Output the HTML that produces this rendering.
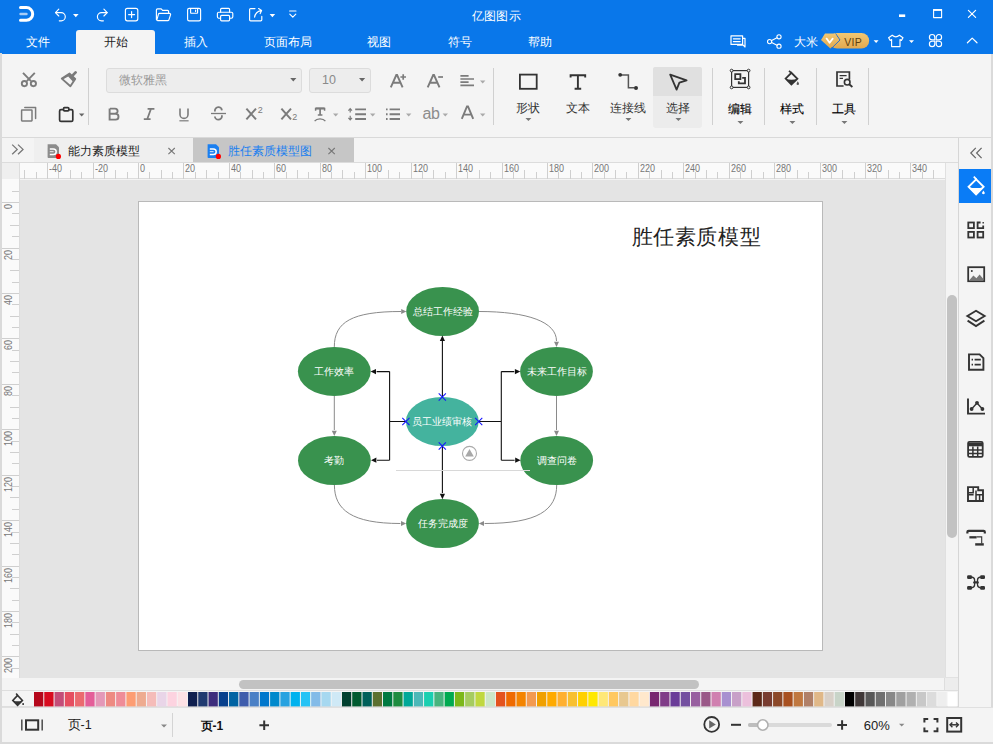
<!DOCTYPE html><html><head><meta charset="utf-8"><style>
*{margin:0;padding:0;box-sizing:border-box}
html,body{width:993px;height:744px;overflow:hidden;background:#f4f4f4;font-family:"Liberation Sans", sans-serif;}
.a{position:absolute}
.t{position:absolute;white-space:nowrap;line-height:1}
svg{position:absolute;overflow:visible}
</style></head><body>
<div class="a" style="left:0;top:0;width:993px;height:54px;background:#0977ea"></div>
<div class="a" style="left:76px;top:30px;width:79px;height:24px;background:#f4f4f4;border-radius:3px 3px 0 0"></div>
<svg width="993" height="53" style="left:0;top:0" fill="none" stroke="#fff" stroke-linecap="round" stroke-linejoin="round">
<path d="M20.5 7.6 H26.4 A6.3 6.3 0 0 1 26.4 20.2 H20.5" stroke-width="3"/>
<path d="M20.5 14 H26.5" stroke-width="2.4" stroke="#a9cdf6"/>
<g stroke-width="1.15">
<path d="M58.8 9.2 L55.5 12.6 L58.8 16"/><path d="M55.6 12.6 H61.2 A4.1 4.1 0 0 1 61.2 20.8 H59.3"/>
<path d="M103.9 9.2 L107.2 12.6 L103.9 16"/><path d="M107.1 12.6 H101.5 A4.1 4.1 0 0 0 101.5 20.8 H103.4"/>
<rect x="125.4" y="8.4" width="12.4" height="12.4" rx="2"/>
<path d="M131.6 11.6 V17.6 M128.6 14.6 H134.6"/>
<path d="M156.4 19.4 V10 A1.2 1.2 0 0 1 157.6 8.8 H161.2 L162.6 10.4 H167.6 A1 1 0 0 1 168.6 11.4 V13"/>
<path d="M156.8 20.2 L158.4 14.4 A1.2 1.2 0 0 1 159.6 13.4 H169.6 A1 1 0 0 1 170.6 14.6 L169 19.6 A1 1 0 0 1 168 20.6 H157.6"/>
<rect x="187.6" y="8.4" width="13" height="12.4" rx="1.6"/>
<path d="M190.6 8.6 V12.6 A0.6 0.6 0 0 0 191.2 13.2 H197 A0.6 0.6 0 0 0 197.6 12.6 V8.6"/><path d="M195.6 10 V11.6"/>
<path d="M220.6 12.2 V9.4 A1 1 0 0 1 221.6 8.4 H228.6 A1 1 0 0 1 229.6 9.4 V12.2"/>
<path d="M220.4 18.2 H218.6 A1.4 1.4 0 0 1 217.4 16.8 V13.6 A1.4 1.4 0 0 1 218.8 12.2 H231.4 A1.4 1.4 0 0 1 232.8 13.6 V16.8 A1.4 1.4 0 0 1 231.4 18.2 H229.6"/>
<rect x="220.6" y="15.4" width="9" height="5.4" rx="1"/>
<path d="M255 8.6 H250.6 A1 1 0 0 0 249.6 9.6 V19.8 A1 1 0 0 0 250.6 20.8 H260.8 A1 1 0 0 0 261.8 19.8 V16.4"/>
<path d="M254.6 17.2 Q255.4 11.6 261.4 10.4 M258.6 8.6 L261.6 10.4 L260.2 13.6"/>
<path d="M289.6 11 H296 M289.8 14.2 L292.8 17.2 L295.8 14.2"/>
</g>
<path d="M73 14 H78.6 L75.8 17.2 Z" fill="#fff" stroke="none"/>
<path d="M269.6 14 H275.2 L272.4 17.2 Z" fill="#fff" stroke="none"/>
<rect x="899" y="14.4" width="6.2" height="2.6" fill="#fff" stroke="none"/>
<path d="M933.6 9.6 H941.6 V17.6 H933.6 Z" stroke-width="1.1" stroke-linecap="butt"/><path d="M933.2 10 H942" stroke-width="1.8" stroke-linecap="butt"/>
<path d="M968.4 10.4 L975.6 17.4 M975.6 10.4 L968.4 17.4" stroke-width="1.2"/>
</svg>
<div class="t" style="left:472px;top:10px;font-size:12px;color:#fff;letter-spacing:0.2px">亿图图示</div>
<div class="t" style="left:25.5px;top:36px;font-size:12px;color:#fff;letter-spacing:0.25px">文件</div>
<div class="t" style="left:103.5px;top:36px;font-size:12px;color:#222;letter-spacing:0.25px">开始</div>
<div class="t" style="left:183.5px;top:36px;font-size:12px;color:#fff;letter-spacing:0.25px">插入</div>
<div class="t" style="left:263.5px;top:36px;font-size:12px;color:#fff;letter-spacing:0.25px">页面布局</div>
<div class="t" style="left:366.5px;top:36px;font-size:12px;color:#fff;letter-spacing:0.25px">视图</div>
<div class="t" style="left:447.5px;top:36px;font-size:12px;color:#fff;letter-spacing:0.25px">符号</div>
<div class="t" style="left:527.5px;top:36px;font-size:12px;color:#fff;letter-spacing:0.25px">帮助</div>
<svg width="993" height="53" style="left:0;top:0" fill="none" stroke="#fff" stroke-linecap="round" stroke-linejoin="round" stroke-width="1.3">
<path d="M742.6 44.4 H731 V35.8 H742.6 Z" stroke-width="1.2"/><path d="M733.4 38.8 H740.2 M733.4 41.6 H740.2" stroke-width="1.2"/><path d="M742.8 38.4 H745 V47 L743.2 45.2 H737.6 V44.6" stroke-width="1.2"/>
<g stroke-width="1.1"><circle cx="779" cy="36.8" r="2.1"/><circle cx="769.6" cy="41.6" r="2.1"/><circle cx="779" cy="46.2" r="2.1"/>
<path d="M771.6 40.6 L777 37.8 M771.6 42.6 L777 45.2"/></g>
<path d="M892.2 35.2 L888.6 37.8 L890.2 40.4 L891.6 39.6 V46.6 H900 V39.6 L901.4 40.4 L903 37.8 L899.4 35.2 Q895.8 38.4 892.2 35.2 Z" stroke-width="1.15"/>
<g stroke-width="1.15"><path d="M934.8 37.2 A2.7 2.7 0 1 0 932.1 39.9 H934.8 Z"/><path d="M936.2 37.2 A2.7 2.7 0 1 1 938.9 39.9 H936.2 Z"/><path d="M934.8 43.9 A2.7 2.7 0 1 1 932.1 41.2 H934.8 Z"/><path d="M936.2 43.9 A2.7 2.7 0 1 0 938.9 41.2 H936.2 Z"/></g>
<path d="M967.4 42.8 L972.2 38.1 L977 42.8" stroke-width="1.2"/>
</g>
<path d="M873.6 40.2 H878.6 L876.1 42.9 Z M909 40.2 H914 L911.5 42.9 Z" fill="#fff" stroke="none"/>
</svg>
<div class="t" style="left:794px;top:36px;font-size:12px;color:#fff;letter-spacing:0.2px">大米</div>
<svg width="60" height="20" style="left:818px;top:32px">
<defs><linearGradient id="vg" x1="0" x2="0" y1="0" y2="1"><stop offset="0" stop-color="#f1c773"/><stop offset="1" stop-color="#e2a94f"/></linearGradient></defs>
<rect x="11.4" y="0.9" width="39.8" height="15.6" rx="7.8" fill="url(#vg)"/>
<path d="M17.6 1.6 L22 8 L13.2 16.6" fill="none" stroke="#2a70c8" stroke-width="1"/>
<path d="M3 8 L7 1.4 H17 L21 8 L12.4 16.4 Z" fill="url(#vg)"/>
<path d="M8.6 6.6 L11.6 10.8 L14.7 6.6" fill="none" stroke="#fff" stroke-width="1.8" stroke-linecap="round" stroke-linejoin="round"/>
</svg>
<div class="t" style="left:844.2px;top:36.6px;font-size:10.5px;color:#5e3f10;letter-spacing:0.3px">VIP</div>
<div class="a" style="left:0;top:54px;width:993px;height:83px;background:#f4f4f4"></div>
<div class="a" style="left:0;top:137px;width:993px;height:1px;background:#d9d9d9"></div>
<div class="a" style="left:88px;top:68px;width:1px;height:57px;background:#d0d0d0"></div>
<div class="a" style="left:493px;top:68px;width:1px;height:57px;background:#d0d0d0"></div>
<div class="a" style="left:712px;top:68px;width:1px;height:57px;background:#d0d0d0"></div>
<div class="a" style="left:764px;top:68px;width:1px;height:57px;background:#d0d0d0"></div>
<div class="a" style="left:816px;top:68px;width:1px;height:57px;background:#d0d0d0"></div>
<div class="a" style="left:868px;top:68px;width:1px;height:57px;background:#d0d0d0"></div>
<div class="a" style="left:106px;top:68px;width:196px;height:25px;background:#ededed;border:1px solid #dcdcdc;border-radius:3px"></div>
<div class="a" style="left:309px;top:68px;width:62px;height:25px;background:#ededed;border:1px solid #dcdcdc;border-radius:3px"></div>
<div class="t" style="left:118.5px;top:73.5px;font-size:12.3px;color:#9a9a9a;">微软雅黑</div>
<div class="t" style="left:322px;top:73.8px;font-size:12.5px;color:#8a8a8a;">10</div>
<svg width="993" height="137" style="left:0;top:0" fill="none" stroke="#7b7b7b" stroke-width="1.5" stroke-linecap="round" stroke-linejoin="round">
<path d="M290.2 78 H296.4 L293.3 81.6 Z M359 78 H365.2 L362.1 81.6 Z" fill="#666" stroke="none"/>
<!-- scissors -->
<circle cx="24.4" cy="83.6" r="2.6" stroke-width="1.9"/><circle cx="33.4" cy="83.6" r="2.6" stroke-width="1.9"/>
<path d="M23 72.8 L31 81.2 M34.8 72.8 L26.8 81.2" stroke-width="1.9" stroke-linecap="butt"/>
<!-- brush -->
<path d="M61.8 78.6 L69.6 73.6 L75.2 79 L70.4 86.2 Z" stroke-width="1.9"/>
<path d="M69.6 73.6 L75.2 79 L72.8 81.6 L68.2 76.6 L63.6 79 L61.8 78.6 Z" fill="#7b7b7b" stroke="none"/>
<path d="M71.8 76.4 L75.6 72.4" stroke-width="2.8"/>
<!-- copy -->
<rect x="21.6" y="110" width="10.4" height="11" rx="0.4"/>
<path d="M24.8 107.6 H35.6 V118.6"/>
<!-- paste -->
<g stroke="#333" stroke-width="1.7">
<rect x="59.6" y="109.6" width="13.2" height="11.8" rx="1.4"/>
<rect x="63.6" y="107.6" width="5.2" height="3.2" rx="0.8" fill="#f4f4f4"/>
</g>
<path d="M79 113.6 H84.4 L81.7 116.6 Z" fill="#666" stroke="none"/>
</svg>
<div class="a" style="left:653px;top:67px;width:49px;height:61px;background:#ececec;border-radius:3px"></div>
<div class="a" style="left:653px;top:67px;width:49px;height:29px;background:#e0e0e0;border-radius:2px 2px 0 0"></div>
<svg width="993" height="137" style="left:0;top:0" fill="none" stroke="#333" stroke-width="1.8" stroke-linecap="butt" stroke-linejoin="miter">
<rect x="519.9" y="74.6" width="16.8" height="14.2"/>
<path d="M570.6 77.6 V75.2 H585.2 V77.6 M577.9 75.2 V88.8 M574.6 88.8 H581.2" stroke-width="1.9"/>
<path d="M620.4 75 H628.4 V87.8 H634.6" stroke-width="1.5" stroke="#555"/>
<circle cx="620.2" cy="74.8" r="1.9" fill="#333" stroke="none"/><circle cx="636" cy="88" r="2" fill="#333" stroke="none"/>
<path d="M670.2 74.6 L686.6 80.4 L679.4 82.6 L676.6 89.6 Z" stroke-width="1.8" stroke-linejoin="round"/>
<rect x="731.6" y="70.6" width="17" height="16.8" stroke-width="1.2"/>
<circle cx="731.6" cy="70.6" r="1.4" fill="#f4f4f4" stroke-width="1"/><circle cx="748.6" cy="70.6" r="1.4" fill="#f4f4f4" stroke-width="1"/>
<circle cx="731.6" cy="87.4" r="1.4" fill="#f4f4f4" stroke-width="1"/><circle cx="748.6" cy="87.4" r="1.4" fill="#f4f4f4" stroke-width="1"/>
<path d="M735.2 74.2 H740.4 V79.2 H735.2 Z M742.2 77.8 H745 V83.4 H738.8 V81.2" stroke-width="1.8"/>
<path d="M785.6 78.6 L791.4 72.8 L797.4 78.8 L791.4 84.6 Z" stroke-width="1.8"/>
<path d="M785.8 79 Q791.4 80.4 797.2 79 L791.4 84.8 Z" fill="#333" stroke="none"/>
<path d="M789 70.8 L791.6 73.2" stroke-width="1.7"/>
<path d="M797.8 81.2 L798.9 83.2 A1.2 1.2 0 1 1 796.7 83.2 Z" fill="#555" stroke="none"/>
<path d="M849.4 79.4 V72 H837 V86 H843.6" stroke-width="1.7"/>
<path d="M839.6 75.6 H846.6 M839.6 78.4 H843" stroke-width="1.3"/>
<circle cx="847.2" cy="82.2" r="2.8" stroke-width="1.6"/><path d="M849.2 84.2 L852.4 87" stroke-width="1.8"/>
</svg>
<div class="t" style="left:515.5px;top:101.5px;font-size:12.2px;color:#333;">形状</div>
<div class="t" style="left:565.5px;top:101.5px;font-size:12.2px;color:#333;">文本</div>
<div class="t" style="left:609.5px;top:101.5px;font-size:12.2px;color:#333;">连接线</div>
<div class="t" style="left:665.5px;top:101.5px;font-size:12.2px;color:#333;">选择</div>
<div class="t" style="left:727.5px;top:103.4px;font-size:12.2px;color:#000;-webkit-text-stroke:0.1px #000">编辑</div>
<div class="t" style="left:779.5px;top:103.4px;font-size:12.2px;color:#000;-webkit-text-stroke:0.1px #000">样式</div>
<div class="t" style="left:831.5px;top:103.4px;font-size:12.2px;color:#000;-webkit-text-stroke:0.1px #000">工具</div>
<svg width="993" height="137" style="left:0;top:0" fill="#777">
<path d="M525.4 118 H531.4 L528.4 121 Z M625.4 118 H631.4 L628.4 121 Z M675.4 118 H681.4 L678.4 121 Z"/>
<path d="M737.4 121 H743.4 L740.4 124 Z M789.4 121 H795.4 L792.4 124 Z M841.4 121 H847.4 L844.4 124 Z"/>
</svg>
<div class="a" style="left:0;top:138px;width:958px;height:24px;background:#f4f4f4"></div>
<div class="a" style="left:34px;top:138px;width:159px;height:24px;background:#efefef"></div>
<div class="a" style="left:193px;top:138px;width:161px;height:24px;background:#c6c6c6"></div>
<div class="t" style="left:67.5px;top:145px;font-size:12px;color:#222;">能力素质模型</div>
<div class="t" style="left:227.5px;top:145px;font-size:12px;color:#1a7ff0;">胜任素质模型图</div>
<div class="a" style="left:2px;top:162px;width:956px;height:17px;background:#fafafa;border-top:1px solid #dcdcdc;border-bottom:1px solid #dcdcdc"></div>
<div class="a" style="left:2px;top:163px;width:17px;height:16px;background:#efefef"></div>
<div class="a" style="left:2px;top:179px;width:17px;height:499px;background:#fafafa"></div>
<div class="a" style="left:19px;top:163px;width:1px;height:515px;background:#dcdcdc"></div>
<svg width="993" height="180" style="left:0;top:0">
<path d="M12.2 144.6 L17.2 149.4 L12.2 154.2 M18 144.6 L23 149.4 L18 154.2" fill="none" stroke="#777" stroke-width="1.3"/>
<path d="M47.6 144.2 H56 L59 147.2 V157.2 A0.8 0.8 0 0 1 58.2 158 H48.4 A0.8 0.8 0 0 1 47.6 157.2 Z" fill="#8c8c8c"/>
<path d="M49.8 148.9 H53.4 A2.8 2.8 0 0 1 53.4 154.5 H49.8" fill="none" stroke="#fff" stroke-width="1.5"/><path d="M49.8 151.6 H53.6" stroke="#dcdcdc" stroke-width="1.2"/>
<circle cx="58.4" cy="156.4" r="2.6" fill="#f00"/>
<path d="M168.4 148 L174.8 154.2 M174.8 148 L168.4 154.2" stroke="#777" stroke-width="1.1"/>
<path d="M207.6 144.2 H216 L219 147.2 V157.2 A0.8 0.8 0 0 1 218.2 158 H208.4 A0.8 0.8 0 0 1 207.6 157.2 Z" fill="#1a7ff0"/>
<path d="M209.8 148.9 H213.4 A2.8 2.8 0 0 1 213.4 154.5 H209.8" fill="none" stroke="#fff" stroke-width="1.5"/><path d="M209.8 151.6 H213.6" stroke="#b8d8fb" stroke-width="1.2"/>
<circle cx="218.4" cy="156.4" r="2.6" fill="#f00"/>
<path d="M328.4 148 L334.8 154.2 M334.8 148 L328.4 154.2" stroke="#777" stroke-width="1.1"/>
</svg>
<svg width="993" height="744" style="left:0;top:0" fill="none" stroke="#cfcfcf" stroke-width="1"><path d="M24.5 170 V179"/><path d="M36.5 172 V179"/><path d="M47.5 163 V179"/><path d="M58.5 172 V179"/><path d="M70.5 170 V179"/><path d="M81.5 172 V179"/><path d="M93.5 163 V179"/><path d="M104.5 172 V179"/><path d="M115.5 170 V179"/><path d="M127.5 172 V179"/><path d="M138.5 163 V179"/><path d="M149.5 172 V179"/><path d="M161.5 170 V179"/><path d="M172.5 172 V179"/><path d="M183.5 163 V179"/><path d="M195.5 172 V179"/><path d="M206.5 170 V179"/><path d="M218.5 172 V179"/><path d="M229.5 163 V179"/><path d="M240.5 172 V179"/><path d="M252.5 170 V179"/><path d="M263.5 172 V179"/><path d="M274.5 163 V179"/><path d="M286.5 172 V179"/><path d="M297.5 170 V179"/><path d="M308.5 172 V179"/><path d="M320.5 163 V179"/><path d="M331.5 172 V179"/><path d="M342.5 170 V179"/><path d="M354.5 172 V179"/><path d="M365.5 163 V179"/><path d="M377.5 172 V179"/><path d="M388.5 170 V179"/><path d="M399.5 172 V179"/><path d="M411.5 163 V179"/><path d="M422.5 172 V179"/><path d="M433.5 170 V179"/><path d="M445.5 172 V179"/><path d="M456.5 163 V179"/><path d="M467.5 172 V179"/><path d="M479.5 170 V179"/><path d="M490.5 172 V179"/><path d="M502.5 163 V179"/><path d="M513.5 172 V179"/><path d="M524.5 170 V179"/><path d="M536.5 172 V179"/><path d="M547.5 163 V179"/><path d="M558.5 172 V179"/><path d="M570.5 170 V179"/><path d="M581.5 172 V179"/><path d="M592.5 163 V179"/><path d="M604.5 172 V179"/><path d="M615.5 170 V179"/><path d="M626.5 172 V179"/><path d="M638.5 163 V179"/><path d="M649.5 172 V179"/><path d="M661.5 170 V179"/><path d="M672.5 172 V179"/><path d="M683.5 163 V179"/><path d="M695.5 172 V179"/><path d="M706.5 170 V179"/><path d="M717.5 172 V179"/><path d="M729.5 163 V179"/><path d="M740.5 172 V179"/><path d="M751.5 170 V179"/><path d="M763.5 172 V179"/><path d="M774.5 163 V179"/><path d="M785.5 172 V179"/><path d="M797.5 170 V179"/><path d="M808.5 172 V179"/><path d="M820.5 163 V179"/><path d="M831.5 172 V179"/><path d="M842.5 170 V179"/><path d="M854.5 172 V179"/><path d="M865.5 163 V179"/><path d="M876.5 172 V179"/><path d="M888.5 170 V179"/><path d="M899.5 172 V179"/><path d="M910.5 163 V179"/><path d="M922.5 172 V179"/><path d="M933.5 170 V179"/><path d="M12 191.5 H19"/><path d="M2 202.5 H19"/><path d="M12 213.5 H19"/><path d="M10 225.5 H19"/><path d="M12 236.5 H19"/><path d="M2 248.5 H19"/><path d="M12 259.5 H19"/><path d="M10 270.5 H19"/><path d="M12 282.5 H19"/><path d="M2 293.5 H19"/><path d="M12 304.5 H19"/><path d="M10 316.5 H19"/><path d="M12 327.5 H19"/><path d="M2 338.5 H19"/><path d="M12 350.5 H19"/><path d="M10 361.5 H19"/><path d="M12 372.5 H19"/><path d="M2 384.5 H19"/><path d="M12 395.5 H19"/><path d="M10 407.5 H19"/><path d="M12 418.5 H19"/><path d="M2 429.5 H19"/><path d="M12 441.5 H19"/><path d="M10 452.5 H19"/><path d="M12 463.5 H19"/><path d="M2 475.5 H19"/><path d="M12 486.5 H19"/><path d="M10 497.5 H19"/><path d="M12 509.5 H19"/><path d="M2 520.5 H19"/><path d="M12 532.5 H19"/><path d="M10 543.5 H19"/><path d="M12 554.5 H19"/><path d="M2 566.5 H19"/><path d="M12 577.5 H19"/><path d="M10 588.5 H19"/><path d="M12 600.5 H19"/><path d="M2 611.5 H19"/><path d="M12 622.5 H19"/><path d="M10 634.5 H19"/><path d="M12 645.5 H19"/><path d="M2 656.5 H19"/><path d="M12 668.5 H19"/></svg>
<div class="t" style="left:48.8px;top:164px;font-size:10px;color:#777;transform-origin:0 0;transform:scaleX(0.9)">-40</div>
<div class="t" style="left:94.8px;top:164px;font-size:10px;color:#777;transform-origin:0 0;transform:scaleX(0.9)">-20</div>
<div class="t" style="left:139.8px;top:164px;font-size:10px;color:#777;transform-origin:0 0;transform:scaleX(0.9)">0</div>
<div class="t" style="left:184.8px;top:164px;font-size:10px;color:#777;transform-origin:0 0;transform:scaleX(0.9)">20</div>
<div class="t" style="left:230.8px;top:164px;font-size:10px;color:#777;transform-origin:0 0;transform:scaleX(0.9)">40</div>
<div class="t" style="left:275.8px;top:164px;font-size:10px;color:#777;transform-origin:0 0;transform:scaleX(0.9)">60</div>
<div class="t" style="left:321.8px;top:164px;font-size:10px;color:#777;transform-origin:0 0;transform:scaleX(0.9)">80</div>
<div class="t" style="left:366.8px;top:164px;font-size:10px;color:#777;transform-origin:0 0;transform:scaleX(0.9)">100</div>
<div class="t" style="left:412.8px;top:164px;font-size:10px;color:#777;transform-origin:0 0;transform:scaleX(0.9)">120</div>
<div class="t" style="left:457.8px;top:164px;font-size:10px;color:#777;transform-origin:0 0;transform:scaleX(0.9)">140</div>
<div class="t" style="left:503.8px;top:164px;font-size:10px;color:#777;transform-origin:0 0;transform:scaleX(0.9)">160</div>
<div class="t" style="left:548.8px;top:164px;font-size:10px;color:#777;transform-origin:0 0;transform:scaleX(0.9)">180</div>
<div class="t" style="left:593.8px;top:164px;font-size:10px;color:#777;transform-origin:0 0;transform:scaleX(0.9)">200</div>
<div class="t" style="left:639.8px;top:164px;font-size:10px;color:#777;transform-origin:0 0;transform:scaleX(0.9)">220</div>
<div class="t" style="left:684.8px;top:164px;font-size:10px;color:#777;transform-origin:0 0;transform:scaleX(0.9)">240</div>
<div class="t" style="left:730.8px;top:164px;font-size:10px;color:#777;transform-origin:0 0;transform:scaleX(0.9)">260</div>
<div class="t" style="left:775.8px;top:164px;font-size:10px;color:#777;transform-origin:0 0;transform:scaleX(0.9)">280</div>
<div class="t" style="left:821.8px;top:164px;font-size:10px;color:#777;transform-origin:0 0;transform:scaleX(0.9)">300</div>
<div class="t" style="left:866.8px;top:164px;font-size:10px;color:#777;transform-origin:0 0;transform:scaleX(0.9)">320</div>
<div class="t" style="left:911.8px;top:164px;font-size:10px;color:#777;transform-origin:0 0;transform:scaleX(0.9)">340</div>
<div class="t" style="left:4.4px;top:203.6px;font-size:10px;color:#777;transform-origin:0 0;transform:rotate(-90deg) translate(-90%,0) scaleX(0.9);text-align:right">0</div>
<div class="t" style="left:4.4px;top:249.6px;font-size:10px;color:#777;transform-origin:0 0;transform:rotate(-90deg) translate(-90%,0) scaleX(0.9);text-align:right">20</div>
<div class="t" style="left:4.4px;top:294.6px;font-size:10px;color:#777;transform-origin:0 0;transform:rotate(-90deg) translate(-90%,0) scaleX(0.9);text-align:right">40</div>
<div class="t" style="left:4.4px;top:339.6px;font-size:10px;color:#777;transform-origin:0 0;transform:rotate(-90deg) translate(-90%,0) scaleX(0.9);text-align:right">60</div>
<div class="t" style="left:4.4px;top:385.6px;font-size:10px;color:#777;transform-origin:0 0;transform:rotate(-90deg) translate(-90%,0) scaleX(0.9);text-align:right">80</div>
<div class="t" style="left:4.4px;top:430.6px;font-size:10px;color:#777;transform-origin:0 0;transform:rotate(-90deg) translate(-90%,0) scaleX(0.9);text-align:right">100</div>
<div class="t" style="left:4.4px;top:476.6px;font-size:10px;color:#777;transform-origin:0 0;transform:rotate(-90deg) translate(-90%,0) scaleX(0.9);text-align:right">120</div>
<div class="t" style="left:4.4px;top:521.6px;font-size:10px;color:#777;transform-origin:0 0;transform:rotate(-90deg) translate(-90%,0) scaleX(0.9);text-align:right">140</div>
<div class="t" style="left:4.4px;top:567.6px;font-size:10px;color:#777;transform-origin:0 0;transform:rotate(-90deg) translate(-90%,0) scaleX(0.9);text-align:right">160</div>
<div class="t" style="left:4.4px;top:612.6px;font-size:10px;color:#777;transform-origin:0 0;transform:rotate(-90deg) translate(-90%,0) scaleX(0.9);text-align:right">180</div>
<div class="t" style="left:4.4px;top:657.6px;font-size:10px;color:#777;transform-origin:0 0;transform:rotate(-90deg) translate(-90%,0) scaleX(0.9);text-align:right">200</div>
<div class="a" style="left:20px;top:180px;width:926px;height:498px;background:#e4e4e4"></div>
<div class="a" style="left:945px;top:163px;width:13px;height:527px;background:#f4f4f4;border-left:1px solid #e0e0e0"></div>
<div class="a" style="left:947px;top:295px;width:10px;height:243px;background:#c2c2c2;border-radius:5px"></div>
<div class="a" style="left:2px;top:678px;width:943px;height:13px;background:#f4f4f4;border-bottom:1px solid #dedede;border-right:1px solid #dedede"></div><div class="a" style="left:945px;top:677px;width:13px;height:14px;background:#ededed;border-top:1px solid #e2e2e2;border-bottom:1px solid #dedede"></div>
<div class="a" style="left:239px;top:680px;width:460px;height:9px;background:#c2c2c2;border-radius:4.5px"></div>
<div class="a" style="left:138px;top:201px;width:685px;height:450px;background:#fff;border:1px solid #b9b9b9"></div>
<svg width="993" height="744" style="left:0;top:0"><ellipse cx="442.6" cy="311.5" rx="36.4" ry="24.5" fill="#39924e"/><ellipse cx="334.3" cy="371.4" rx="36.4" ry="24.5" fill="#39924e"/><ellipse cx="556.5" cy="371.4" rx="36.4" ry="24.5" fill="#39924e"/><ellipse cx="442.3" cy="421.5" rx="36.4" ry="24.5" fill="#44b39e"/><ellipse cx="334.4" cy="460.5" rx="36.4" ry="24.5" fill="#39924e"/><ellipse cx="556.7" cy="460.5" rx="36.4" ry="24.5" fill="#39924e"/><ellipse cx="442.5" cy="523.5" rx="36.4" ry="24.5" fill="#39924e"/><g fill="none" stroke="#8a8a8a" stroke-width="1"><path d="M334.3 346.9 C334.3 322 352 311.5 401 311.5"/><path d="M479 311.5 C528 311.5 556.5 322 556.5 341"/><path d="M334.3 395.9 V430"/><path d="M556.5 395.9 V430"/><path d="M334.4 485 C334.4 510 352 523.5 400.4 523.5"/><path d="M556.7 485 C556.7 510 538 523.5 484.6 523.5"/></g><g fill="#8a8a8a"><path d="M406.4 311.5 L401.2 309 V314 Z"/><path d="M556.5 347 L554 341.8 H559 Z"/><path d="M334.3 436 L331.8 430.8 H336.8 Z"/><path d="M556.5 436 L554 430.8 H559 Z"/><path d="M406.2 523.5 L401 521 V526 Z"/><path d="M478.8 523.5 L484 521 V526 Z"/></g><g fill="none" stroke="#111" stroke-width="1.1"><path d="M442.4 397 V341"/><path d="M405.9 421.5 H389.6 M389.6 371.6 V460.2 M389.6 371.6 H376.6 M389.6 460.2 H377"/><path d="M478.7 421.5 H501.3 M501.3 371.6 V460.2 M501.3 371.6 H514.3 M501.3 460.2 H514.6"/><path d="M442.4 446 V493"/></g><g fill="#111"><path d="M442.4 335.6 L439.8 341 H445 Z"/><path d="M370.6 371.6 L376 369 V374.2 Z"/><path d="M371 460.2 L376.4 457.6 V462.8 Z"/><path d="M520.3 371.6 L514.9 369 V374.2 Z"/><path d="M520.6 460.2 L515.2 457.6 V462.8 Z"/><path d="M442.4 499.2 L439.8 493.8 H445 Z"/></g><path d="M396 470.5 H530" stroke="#d8d8d8" stroke-width="1"/><g stroke="#1414ff" stroke-width="1.05" fill="none"><path d="M438.7 393.4 L445.90000000000003 400.6 M445.90000000000003 393.4 L438.7 400.6"/><path d="M402.29999999999995 417.9 L409.5 425.1 M409.5 417.9 L402.29999999999995 425.1"/><path d="M475.09999999999997 417.9 L482.3 425.1 M482.3 417.9 L475.09999999999997 425.1"/><path d="M438.7 442.4 L445.90000000000003 449.6 M445.90000000000003 442.4 L438.7 449.6"/></g><circle cx="469.5" cy="453.4" r="7" fill="#fff" stroke="#aaa" stroke-width="1.1"/><path d="M469.5 449 L473.8 456.6 H465.2 Z" fill="#a8a8a8"/></svg>
<div class="t" style="left:392.6px;top:307.2px;width:100px;text-align:center;font-size:10px;color:#fff">总结工作经验</div>
<div class="t" style="left:284.3px;top:367.09999999999997px;width:100px;text-align:center;font-size:10px;color:#fff">工作效率</div>
<div class="t" style="left:506.5px;top:367.09999999999997px;width:100px;text-align:center;font-size:10px;color:#fff">未来工作目标</div>
<div class="t" style="left:392.3px;top:417.2px;width:100px;text-align:center;font-size:10px;color:#fff">员工业绩审核</div>
<div class="t" style="left:284.4px;top:456.2px;width:100px;text-align:center;font-size:10px;color:#fff">考勤</div>
<div class="t" style="left:506.70000000000005px;top:456.2px;width:100px;text-align:center;font-size:10px;color:#fff">调查问卷</div>
<div class="t" style="left:392.5px;top:519.2px;width:100px;text-align:center;font-size:10px;color:#fff">任务完成度</div>
<div class="t" style="left:631.8px;top:226.2px;font-size:21.2px;color:#222;letter-spacing:0.55px">胜任素质模型</div>
<div class="a" style="left:0;top:53px;width:2px;height:691px;background:#dadada"></div>
<div class="a" style="left:958px;top:138px;width:35px;height:569px;background:#f4f4f4;border-left:1px solid #d6d6d6"></div>
<div class="a" style="left:991px;top:54px;width:2px;height:653px;background:#dadada"></div>
<div class="a" style="left:959px;top:169px;width:32px;height:34px;background:#0a7cf6"></div>
<svg width="993" height="137" style="left:0;top:0" fill="none" stroke="#7b7b7b" stroke-width="1.5" stroke-linecap="butt" stroke-linejoin="miter">
<path d="M110 108.6 H115 A2.6 2.6 0 0 1 115 113.8 H110 M110 113.8 H115.6 A2.9 2.9 0 0 1 115.6 119.6 H109.6 V108.6" stroke-width="1.9"/>
<path d="M147.6 108.8 H154.4 M143.8 119.2 H150.6 M151 108.8 L147.2 119.2" stroke-width="1.8"/>
<path d="M180 108.4 V114.4 A4 4 0 0 0 188 114.4 V108.4" stroke-width="1.6"/><path d="M179.4 120.8 H188.6" stroke-width="1.2"/>
<path d="M214.9 111.6 V110.8 A3.5 3.4 0 0 1 221.9 110.4 M214.9 116.4 A3.5 3.2 0 0 0 221.9 116.4 V115.2" stroke-width="1.8"/><path d="M211 113.5 H226" stroke-width="1.3"/>
<path d="M246.4 108.6 L256 119.4 M256 108.6 L246.4 119.4" stroke-width="2"/>
<path d="M281.4 108.6 L291 119.4 M291 108.6 L281.4 119.4" stroke-width="2"/>
<path d="M315.6 110.8 V108.4 H324.6 V110.8" stroke-width="1.5"/><path d="M315.6 108.4 H324.6" stroke-width="2"/><path d="M320.1 108.4 V115 M317.8 115 H322.4" stroke-width="1.7"/><path d="M314.6 121.2 A6 4 0 0 1 325.4 121.2" stroke-width="1.3"/>
<path d="M355.2 109.4 H366 M355.2 114.2 H366 M355.2 119 H366" stroke-width="1.9"/>
<path d="M350.2 108.8 V112.4 M350.2 115.8 V119.6 M348.4 110.6 L350.2 108.6 L352 110.6 M348.4 117.8 L350.2 119.8 L352 117.8" stroke-width="1.2"/>
<path d="M389.6 109.4 H400 M389.6 114.2 H400 M389.6 119 H400" stroke-width="1.9"/>
<path d="M386 109.4 H387.6 M386 114.2 H387.6 M386 119 H387.6" stroke-width="1.9"/>
</svg>
<div class="t" style="left:257.8px;top:106.4px;font-size:9px;color:#7b7b7b;font-family:"Liberation Serif",serif">2</div>
<div class="t" style="left:292.2px;top:113.2px;font-size:9px;color:#7b7b7b;font-family:"Liberation Serif",serif">2</div>
<div class="t" style="left:422.6px;top:105.6px;font-size:16px;color:#8c8c8c;letter-spacing:-0.5px">ab</div>
<svg width="993" height="137" style="left:0;top:0"><path d="M333 113.6 H338.4 L335.7 116.4 Z M370 113.6 H375.4 L372.7 116.4 Z M406 113.6 H411.4 L408.7 116.4 Z M442.6 113.6 H448 L445.3 116.4 Z M480 113.6 H485.4 L482.7 116.4 Z M480 80.6 H485.4 L482.7 83.4 Z" fill="#aaa"/></svg>
<svg width="993" height="137" style="left:0;top:0" fill="none" stroke="#7b7b7b">
<path d="M390.8 87.4 L396.3 75 H397.1 L402.6 87.4 M392.7 82.8 H400.7" stroke-width="1.9"/>
<path d="M400.4 77 H406 M403.2 74.2 V79.8" stroke-width="1.7"/>
<path d="M427.7 87.4 L433.2 75 H434 L439.5 87.4 M429.6 82.8 H437.6" stroke-width="1.9"/>
<path d="M438.2 77 H443" stroke-width="1.7"/>
<path d="M460.4 75.8 H468.6 M460.4 79 H474 M460.4 82.2 H468.6 M460.4 85.4 H474" stroke-width="1.7"/>
<path d="M461.8 118.8 L467 106.4 H468 L473.2 118.8 M463.8 114.6 H471.2" stroke-width="1.9"/>
</svg>
<svg width="993" height="744" style="left:0;top:0" fill="none" stroke="#333" stroke-width="1.8" stroke-linejoin="miter">
<path d="M975.8 147.8 L970.8 153 L975.8 158.2 M981.6 147.8 L976.6 153 L981.6 158.2" stroke="#666" stroke-width="1.2"/>
<g stroke="#fff">
<path d="M976.2 179.4 L983.6 186.8 L976.1 194.3 L968.6 186.8 Z" stroke-width="1.9"/>
<path d="M968.6 187.2 Q976.1 189 983.6 187.2 L976.1 194.6 Z" fill="#fff" stroke="none"/>
<path d="M976.4 179.4 L973.8 176.6" stroke-width="1.8"/>
</g>
<path d="M983.4 190.4 L984.6 192.4 A1.3 1.3 0 1 1 982.2 192.4 Z" fill="#fff" stroke="none"/>
<rect x="968.3" y="222.5" width="5.6" height="5.6"/>
<rect x="968.3" y="231.9" width="5.6" height="5.6"/>
<rect x="977.6" y="231.9" width="5.6" height="5.6"/>
<path d="M980.6 222.5 H977.6 V228.1 H983.2 V225.6"/>
<path d="M983.2 222 V223.6" stroke-width="1.4"/>
<rect x="968.2" y="267.2" width="16" height="14"/>
<circle cx="971.8" cy="271" r="1" fill="#333" stroke="none"/>
<path d="M969 280.6 L973.4 275.6 L976.4 278.2 L979.6 274.6 L983.4 279 V280.8 H969 Z" fill="#777" stroke="none"/>
<path d="M976 310.8 L984.6 316 L976 321.2 L967.4 316 Z" stroke-width="1.9"/>
<path d="M967.6 320.6 L976 326 L984.4 320.6" stroke-width="1.9"/>
<path d="M969 354.4 H979.6 L983.4 358.2 V369.8 H969 Z" stroke-width="1.9"/>
<path d="M974.6 359.6 H980.8 M974.6 364.6 H980.8" stroke-width="1.9"/>
<path d="M971.6 359.6 H973 M971.6 364.6 H973" stroke-width="1.9"/>
<path d="M968 398.6 V413.6 H985" stroke-width="1.9"/>
<path d="M971.6 409 L977 403 L982.4 409" stroke-width="1.4"/>
<circle cx="971.6" cy="409" r="1.9" fill="#333" stroke="none"/><circle cx="977" cy="402.8" r="1.9" fill="#333" stroke="none"/><circle cx="982.4" cy="409" r="1.9" fill="#333" stroke="none"/>
<rect x="968.1" y="441.9" width="14.6" height="15" rx="1.4"/>
<path d="M968.6 444.6 H982.4" stroke-width="3.4"/>
<path d="M968.2 450 H982.6 M968.2 453.6 H982.6 M972.9 446.4 V456.8 M977.7 446.4 V456.8" stroke-width="1.5"/>
<path d="M968 487.1 H978.2 V490.2 H983 V501 H968 Z" stroke-width="1.9"/>
<path d="M973.2 487.4 V492.8 H968.4 M976 490.6 V500.8 M968.4 494.8 H973.6 M979.6 494.8 V500.8 M976 494.8 H982.8" stroke-width="1.5"/>
<path d="M967.4 533.6 V532 Q967.4 530.8 968.6 530.8 H983.6 Q984.8 530.8 984.8 532 V533.6" stroke-width="2.2" stroke-linecap="butt"/>
<path d="M969.4 537.3 H976.6" stroke-width="2.3"/>
<path d="M975.2 544.4 H983.8" stroke-width="2.4"/>
<path d="M976.6 536.9 H981.7 V543.4" stroke-width="1.1"/>
<rect x="967.1" y="575.2" width="4.9" height="3.7" rx="1.2" fill="#333" stroke="none"/>
<rect x="980.1" y="575.2" width="4.9" height="3.7" rx="1.2" fill="#333" stroke="none"/>
<rect x="967.1" y="586.1" width="4.9" height="3.7" rx="1.2" fill="#333" stroke="none"/>
<rect x="980.1" y="586.1" width="4.9" height="3.7" rx="1.2" fill="#333" stroke="none"/>
<rect x="973.2" y="581.2" width="5.6" height="2.4" rx="1.2" fill="#333" stroke="none"/>
<path d="M971.6 577 Q974.6 577.4 974.6 580 V584.8 Q974.6 587.4 971.6 587.8 M980.5 577 Q977.5 577.4 977.5 580 V584.8 Q977.5 587.4 980.5 587.8" stroke-width="1.3"/>
</svg>
<div class="a" style="left:2px;top:691px;width:956px;height:16px;background:#f4f4f4;border-bottom:1px solid #dedede"></div>
<svg width="993" height="744" style="left:0;top:0"><rect x="34.00" y="692" width="9.3" height="14.4" fill="#b5071b"/><rect x="44.27" y="692" width="9.3" height="14.4" fill="#d80b1f"/><rect x="54.53" y="692" width="9.3" height="14.4" fill="#c44d78"/><rect x="64.80" y="692" width="9.3" height="14.4" fill="#e64e60"/><rect x="75.06" y="692" width="9.3" height="14.4" fill="#eb6a6f"/><rect x="85.33" y="692" width="9.3" height="14.4" fill="#e45e99"/><rect x="95.59" y="692" width="9.3" height="14.4" fill="#e498b8"/><rect x="105.86" y="692" width="9.3" height="14.4" fill="#ee8a82"/><rect x="116.12" y="692" width="9.3" height="14.4" fill="#ef8c98"/><rect x="126.39" y="692" width="9.3" height="14.4" fill="#fd9d73"/><rect x="136.65" y="692" width="9.3" height="14.4" fill="#eeab90"/><rect x="146.92" y="692" width="9.3" height="14.4" fill="#f5bcb9"/><rect x="157.18" y="692" width="9.3" height="14.4" fill="#e9d5e8"/><rect x="167.44" y="692" width="9.3" height="14.4" fill="#fdd3e0"/><rect x="177.71" y="692" width="9.3" height="14.4" fill="#fde1e5"/><rect x="187.98" y="692" width="9.3" height="14.4" fill="#0f1f4f"/><rect x="198.24" y="692" width="9.3" height="14.4" fill="#203a70"/><rect x="208.50" y="692" width="9.3" height="14.4" fill="#3d2c7c"/><rect x="218.77" y="692" width="9.3" height="14.4" fill="#073f8c"/><rect x="229.04" y="692" width="9.3" height="14.4" fill="#0063a3"/><rect x="239.30" y="692" width="9.3" height="14.4" fill="#3e5cac"/><rect x="249.56" y="692" width="9.3" height="14.4" fill="#4a80c6"/><rect x="259.83" y="692" width="9.3" height="14.4" fill="#0077cc"/><rect x="270.10" y="692" width="9.3" height="14.4" fill="#0089cc"/><rect x="280.36" y="692" width="9.3" height="14.4" fill="#27a2e0"/><rect x="290.62" y="692" width="9.3" height="14.4" fill="#00b2ee"/><rect x="300.89" y="692" width="9.3" height="14.4" fill="#26c3f5"/><rect x="311.16" y="692" width="9.3" height="14.4" fill="#82bbe8"/><rect x="321.42" y="692" width="9.3" height="14.4" fill="#a6d8f0"/><rect x="331.69" y="692" width="9.3" height="14.4" fill="#cfe9f6"/><rect x="341.95" y="692" width="9.3" height="14.4" fill="#00402f"/><rect x="352.22" y="692" width="9.3" height="14.4" fill="#005a30"/><rect x="362.48" y="692" width="9.3" height="14.4" fill="#00605a"/><rect x="372.75" y="692" width="9.3" height="14.4" fill="#5c7030"/><rect x="383.01" y="692" width="9.3" height="14.4" fill="#007a42"/><rect x="393.28" y="692" width="9.3" height="14.4" fill="#1e8c40"/><rect x="403.54" y="692" width="9.3" height="14.4" fill="#00a898"/><rect x="413.81" y="692" width="9.3" height="14.4" fill="#4cb8b8"/><rect x="424.07" y="692" width="9.3" height="14.4" fill="#1acfb0"/><rect x="434.34" y="692" width="9.3" height="14.4" fill="#48b47e"/><rect x="444.60" y="692" width="9.3" height="14.4" fill="#00aa50"/><rect x="454.87" y="692" width="9.3" height="14.4" fill="#7cb81a"/><rect x="465.13" y="692" width="9.3" height="14.4" fill="#a6cc60"/><rect x="475.40" y="692" width="9.3" height="14.4" fill="#c0d840"/><rect x="485.66" y="692" width="9.3" height="14.4" fill="#cde6c8"/><rect x="495.93" y="692" width="9.3" height="14.4" fill="#e4531e"/><rect x="506.19" y="692" width="9.3" height="14.4" fill="#ef6a00"/><rect x="516.46" y="692" width="9.3" height="14.4" fill="#f48400"/><rect x="526.72" y="692" width="9.3" height="14.4" fill="#f39a50"/><rect x="536.99" y="692" width="9.3" height="14.4" fill="#f0a000"/><rect x="547.25" y="692" width="9.3" height="14.4" fill="#ffaa00"/><rect x="557.51" y="692" width="9.3" height="14.4" fill="#ffb030"/><rect x="567.78" y="692" width="9.3" height="14.4" fill="#f8c030"/><rect x="578.05" y="692" width="9.3" height="14.4" fill="#ffd000"/><rect x="588.31" y="692" width="9.3" height="14.4" fill="#ffe800"/><rect x="598.58" y="692" width="9.3" height="14.4" fill="#ffe878"/><rect x="608.84" y="692" width="9.3" height="14.4" fill="#ffc860"/><rect x="619.11" y="692" width="9.3" height="14.4" fill="#e8c890"/><rect x="629.37" y="692" width="9.3" height="14.4" fill="#ffd8a0"/><rect x="639.63" y="692" width="9.3" height="14.4" fill="#ffe8cc"/><rect x="649.90" y="692" width="9.3" height="14.4" fill="#782870"/><rect x="660.17" y="692" width="9.3" height="14.4" fill="#803c88"/><rect x="670.43" y="692" width="9.3" height="14.4" fill="#6a3c98"/><rect x="680.70" y="692" width="9.3" height="14.4" fill="#7450a0"/><rect x="690.96" y="692" width="9.3" height="14.4" fill="#9860a0"/><rect x="701.23" y="692" width="9.3" height="14.4" fill="#9a5888"/><rect x="711.49" y="692" width="9.3" height="14.4" fill="#d080b0"/><rect x="721.75" y="692" width="9.3" height="14.4" fill="#a890d0"/><rect x="732.02" y="692" width="9.3" height="14.4" fill="#c8a0c8"/><rect x="742.29" y="692" width="9.3" height="14.4" fill="#ecc0dc"/><rect x="752.55" y="692" width="9.3" height="14.4" fill="#5c2818"/><rect x="762.82" y="692" width="9.3" height="14.4" fill="#783c30"/><rect x="773.08" y="692" width="9.3" height="14.4" fill="#8c4828"/><rect x="783.35" y="692" width="9.3" height="14.4" fill="#a85020"/><rect x="793.61" y="692" width="9.3" height="14.4" fill="#c07840"/><rect x="803.88" y="692" width="9.3" height="14.4" fill="#b08068"/><rect x="814.14" y="692" width="9.3" height="14.4" fill="#e0b888"/><rect x="824.41" y="692" width="9.3" height="14.4" fill="#d8d0c8"/><rect x="834.67" y="692" width="9.3" height="14.4" fill="#c8d4c8"/><rect x="844.94" y="692" width="9.3" height="14.4" fill="#000000"/><rect x="855.20" y="692" width="9.3" height="14.4" fill="#403838"/><rect x="865.47" y="692" width="9.3" height="14.4" fill="#585858"/><rect x="875.73" y="692" width="9.3" height="14.4" fill="#707070"/><rect x="886.00" y="692" width="9.3" height="14.4" fill="#888888"/><rect x="896.26" y="692" width="9.3" height="14.4" fill="#a0a0a0"/><rect x="906.53" y="692" width="9.3" height="14.4" fill="#b0b0b0"/><rect x="916.79" y="692" width="9.3" height="14.4" fill="#c8c8c8"/><rect x="927.06" y="692" width="9.3" height="14.4" fill="#dcdcdc"/><rect x="937.32" y="692" width="9.3" height="14.4" fill="#eeeeee"/><rect x="947.59" y="692" width="9.3" height="14.4" fill="#ffffff"/></svg>
<div class="a" style="left:2px;top:707px;width:991px;height:35px;background:#f4f4f4;border-top:1px solid #e0e0e0"></div>
<div class="a" style="left:0;top:742px;width:993px;height:2px;background:#dadada"></div>
<svg width="993" height="744" style="left:0;top:0" fill="none" stroke="#333" stroke-width="1.9">
<path d="M17.6 695.4 L12.8 700.4 L17.6 705.4 L22.4 700.4 Z" stroke-width="1.6"/>
<path d="M13 701 Q17.6 701.6 22.2 701 L17.6 705.6 Z" fill="#333" stroke="none"/>
<path d="M17.6 695.4 L16.2 693.6" stroke-width="1.6"/>
<rect x="22.3" y="703.2" width="1.7" height="1.7" fill="#333" stroke="none"/>
<path d="M21.8 719.4 V730.6" stroke-width="1.6" stroke="#555"/>
<rect x="26" y="720.3" width="12.2" height="9.4" stroke-width="2"/>
<path d="M42.2 719.4 V730.6" stroke-width="1.6" stroke="#555"/>
<path d="M161 724.4 H167 L164 727.4 Z M899 723.8 H904.4 L901.7 726.6 Z" fill="#888" stroke="none"/>
<path d="M259.4 725.2 H269 M264.2 720.4 V730" stroke-width="2"/>
<circle cx="711.7" cy="724.4" r="7.4" stroke-width="1.8"/>
<path d="M709.2 720.2 L715.8 724.4 L709.2 728.6 Z" fill="#666" stroke="none"/>
<path d="M731 724.8 H741" stroke-width="2"/>
<path d="M837.2 725 H847 M842.1 720.2 V729.8" stroke-width="2"/>
<path d="M750 725 H830" stroke="#dadada" stroke-width="4" stroke-linecap="round"/>
<path d="M750 725 H762" stroke="#bdbdbd" stroke-width="4" stroke-linecap="round"/>
<circle cx="762.8" cy="725" r="5.2" fill="#fff" stroke="#b0b0b0" stroke-width="1.6"/>
<path d="M924.4 722.6 V719 H928.2 M933.6 719 H937.4 V722.6 M937.4 727.6 V731.2 H933.6 M928.2 731.2 H924.4 V727.6" stroke-width="2"/>
<rect x="947.2" y="718" width="14" height="13.6" stroke-width="2"/>
<path d="M950.6 724.8 H957.8" stroke-width="1.5"/>
<path d="M952.4 722.4 L950 724.8 L952.4 727.2 M956 722.4 L958.4 724.8 L956 727.2" stroke-width="1.4"/>
</svg>
<div class="a" style="left:172px;top:713px;width:1px;height:24px;background:#d4d4d4"></div>
<div class="t" style="left:67.5px;top:718.5px;font-size:12.5px;color:#222;">页-1</div>
<div class="t" style="left:200.5px;top:719.5px;font-size:12px;color:#111;font-weight:bold">页-1</div>
<div class="t" style="left:863.8px;top:719.2px;font-size:13px;color:#222;">60%</div>
</body></html>
